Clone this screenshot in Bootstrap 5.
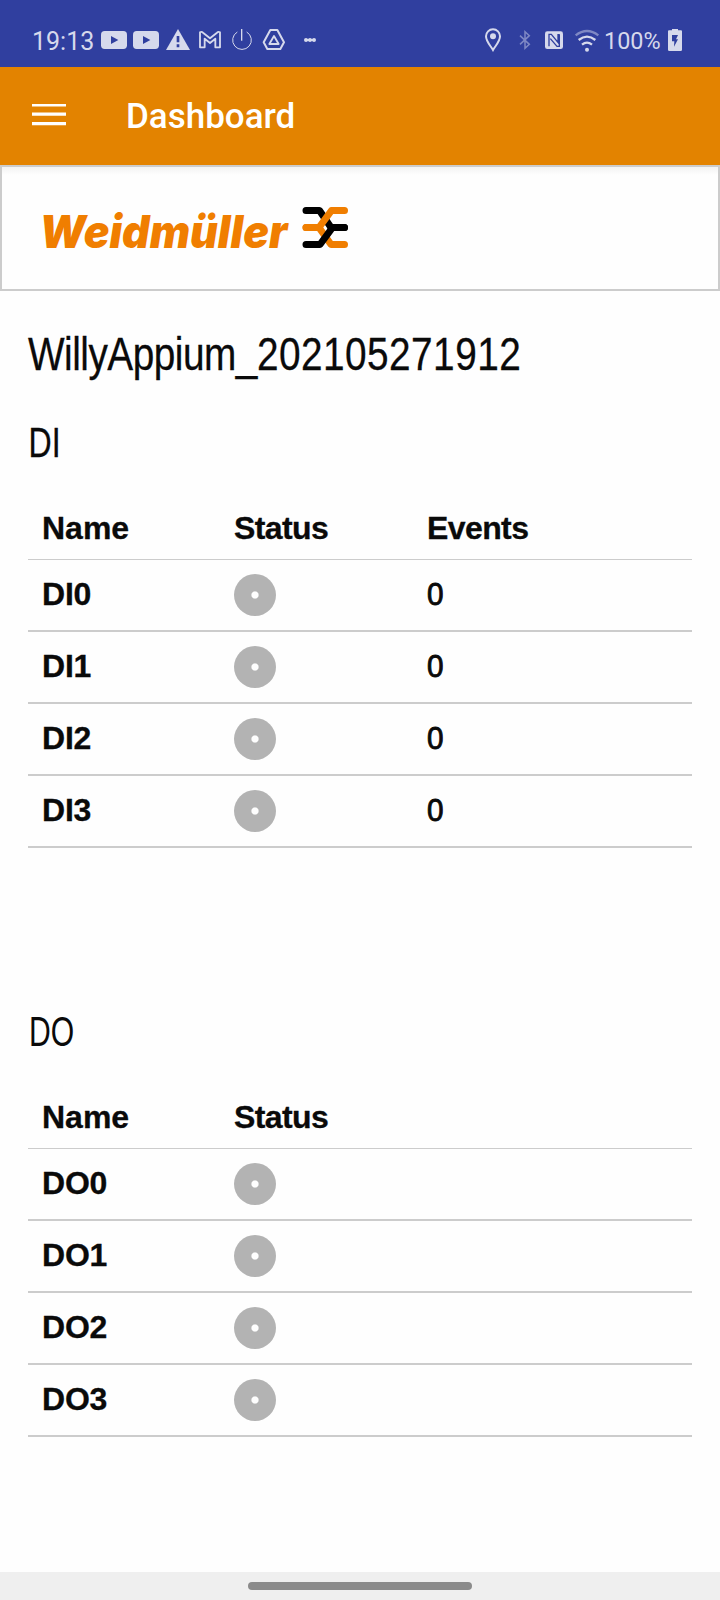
<!DOCTYPE html>
<html lang="en">
<head>
<meta charset="utf-8">
<meta name="viewport" content="width=device-width, initial-scale=1">
<title>Dashboard</title>
<link href="https://cdn.jsdelivr.net/npm/bootstrap@5.3.0/dist/css/bootstrap.min.css" rel="stylesheet">
<style>
  body { background: #fefefe; color: #0a0a0a; font-family: "Liberation Sans", Arial, sans-serif; }
  .screen { width: 720px; height: 1600px; }
  .statusbar { height: 67px; padding: 28px 0 0 32px; background: #303f9f; color: #d6d9ec; font-family: Roboto, sans-serif; line-height: 24px; }
  .statusbar svg { display: block; height: 24px; flex: none; }
  .clock { width: 67px; font-size: 25px; padding-top: 2px; }
  .battery-text { width: 61px; font-size: 23.4px; padding-top: 1px; }
  .appbar { height: 98px; padding-left: 32px; background: #e38300; color: #fff; font-family: Roboto, sans-serif; }
  .appbar-title { font-size: 35px; font-weight: 500; line-height: 40px; margin-left: 60px; padding-top: 2px; }
  .brand { height: 126px; border: 2px solid #ccc; background: linear-gradient(#f2f2f2, #fefefe 8px); padding: 28px 0 0 38px; }
  .brand svg { display: block; }
  .page { padding: 33px 28px 0; }
  .title-text { font-size: 46.5px; line-height: 60px; white-space: nowrap; transform-origin: 0 50%; transform: scaleX(.834); margin: 0; font-weight: 400; -webkit-text-stroke: .3px #0a0a0a; }
  .title-word { letter-spacing: -.6px; }
  .title-stamp { letter-spacing: .55px; }
  .section-text { font-size: 43px; line-height: 60px; margin: 0 0 25px; font-weight: 400; transform-origin: 0 50%; transform: translateX(.5px) scaleX(.745); -webkit-text-stroke: .3px #0a0a0a; }
  .section-text.outputs { transform: translateX(1px) scaleX(.7); -webkit-text-stroke: 0; }
  .io { table-layout: fixed; margin: 0; color: #0a0a0a; --bs-table-bg: transparent; --bs-table-color: #0a0a0a; border-collapse: separate; border-spacing: 0; font-size: 32px; line-height: 36px; }
  .io > :not(caption) > * > * { padding: 0 14px; vertical-align: middle; border: 0 solid #ccc; }
  .io > thead > tr > th { height: 63px; border-bottom-width: 1px; }
  .io > thead > tr > th + th { letter-spacing: -.6px; }
  .io > tbody > tr > * { height: 72px; border-bottom-width: 2px; }
  .io > tbody > tr > th, .io > tbody > tr > td.count { padding-bottom: 2px; }
  .io > tbody > tr > th { letter-spacing: -.2px; }
  .io th { -webkit-text-stroke: .3px #0a0a0a; }
  .count { -webkit-text-stroke: .9px #0a0a0a; }
  .count span { display: inline-block; transform: scaleX(.93); transform-origin: 0 50%; }
  .led { display: block; width: 42px; height: 42px; border-radius: 50%; background: radial-gradient(circle, #fefefe 3px, #b3b3b3 4.2px); }
  .gesture { height: 28px; background: #efefef; }
  .pill { width: 224px; height: 8px; border-radius: 4px; background: #8b8b8b; }
</style>
</head>
<body>
<div class="screen d-flex flex-column overflow-hidden">
  <div class="statusbar d-flex">
    <div class="clock flex-shrink-0">19:13</div>
    <svg width="32" viewBox="297 84 96 72"><rect x="303" y="93" width="78" height="54" rx="11" fill="#d6d9ec"/><path d="M333 108l22 12-22 12z" fill="#303f9f"/></svg>
    <svg width="33" viewBox="393 84 99 72"><rect x="399" y="93" width="78" height="54" rx="11" fill="#d6d9ec"/><path d="M429 108l22 12-22 12z" fill="#303f9f"/></svg>
    <svg width="32" viewBox="492 84 96 72"><path d="M534 87l36 63h-72z" fill="#d6d9ec"/><path d="M534 108v19M534 133v9" stroke="#303f9f" stroke-width="8"/></svg>
    <svg width="33" viewBox="588 84 99 72" fill="none" stroke="#d6d9ec"><path d="M600 142V97q5-3 9 1l21 17 21-17q4-4 9-1v45h-14v-26l-16 13-16-13v26z" stroke-width="5.500" stroke-linejoin="round"/></svg>
    <svg width="31" viewBox="687 84 93 72" fill="none" stroke="#d6d9ec"><path d="M725 87v35" stroke-width="4"/><path d="M712 96a28 28 0 1 0 28 0" stroke-width="3"/></svg>
    <svg width="40" viewBox="780 84 120 72" fill="none" stroke="#d6d9ec" stroke-linejoin="round"><path d="M811 90h21l20 37-11 20h-39l-11-20z" stroke-width="6"/><path d="M822 108l14 24h-28z" stroke-width="5.500"/></svg>
    <svg width="20" viewBox="900 84 60 72" fill="#d6d9ec"><circle cx="918" cy="120" r="6"/><circle cx="930" cy="120" r="6"/><circle cx="942" cy="120" r="6"/><path d="M918 117h24v6h-24z"/></svg>
    <svg class="ms-auto" width="30" viewBox="60 84 90 72"><path d="M99 150c-6-11-21-25-21-41a21 21 0 0 1 42 0c0 16-15 30-21 41z" fill="none" stroke="#d6d9ec" stroke-width="6"/><circle cx="99" cy="109" r="9" fill="#d6d9ec"/></svg>
    <svg width="30" viewBox="150 84 90 72" fill="none" stroke="#7f88c4" stroke-width="4.500"><path d="M180 107l28 26-13 12V95l13 12-28 26"/></svg>
    <svg width="30" viewBox="240 84 90 72"><rect x="255" y="94" width="54" height="53" rx="7" fill="#d6d9ec"/><path d="M267 139v-36h7l20 24v-23h4M298 103v36h-7l-20-23" fill="none" stroke="#303f9f" stroke-width="4"/></svg>
    <svg width="34" viewBox="330 84 102 72" fill="none" stroke-width="7"><path d="M347 106q34-26 68 0" stroke="#7f88c4"/><path d="M356 120q25-20 50 0M366 134q15-12 30 0" stroke="#d6d9ec"/><circle cx="381" cy="149" r="6" fill="#d6d9ec"/></svg>
    <div class="battery-text flex-shrink-0">100%</div>
    <svg width="55" viewBox="615 84 165 72"><path d="M624 94q0-3 3-3h9v-4h18v4h9q3 0 3 3v55q0 4-4 4h-34q-4 0-4-4z" fill="#d6d9ec"/><path d="M636 105h18l-6 13h6l-12 22 1-16h-7z" fill="#303f9f"/></svg>
  </div>
  <header class="appbar d-flex align-items-center">
    <svg width="34" height="24" viewBox="0 0 34 24" fill="#fff" class="flex-shrink-0"><path d="M0 1h34v3.300H0zM0 10.300h34v3.300H0zM0 19.700h34v3.300H0z" transform="translate(0 -1.800)"/></svg>
    <div class="appbar-title">Dashboard</div>
  </header>
  <div class="brand">
    <svg width="320" height="70" viewBox="40 195 320 70">
      <text x="39.500" y="247.500" font-family="Inter, sans-serif" font-weight="900" font-style="italic" font-size="45" fill="#f07e00" textLength="248" lengthAdjust="spacingAndGlyphs">Weidmüller</text>
      <g fill="none" stroke-width="7" stroke-linecap="round" stroke-linejoin="round">
        <path d="M306 210.500H319.500L331 227.500H344.500" stroke="#000"/>
        <path d="M344.500 244.500H331L319 227.500H306" stroke="#f07e00"/>
        <path d="M344.500 210.500H331.500L319 227.500H306" stroke="#f07e00"/>
        <path d="M306 244.500H320L332.500 227.500H344.500" stroke="#000"/>
      </g>
    </svg>
  </div>
  <main class="page flex-grow-1">
    <h1 class="title-text"><span class="title-word">WillyAppium_</span><span class="title-stamp">202105271912</span></h1>
    <h2 class="section-text" style="margin-top:28px">DI</h2>
    <table class="table io">
      <colgroup><col style="width:192px"><col style="width:193px"><col></colgroup>
      <thead><tr><th>Name</th><th>Status</th><th>Events</th></tr></thead>
      <tbody>
        <tr><th>DI0</th><td><span class="led"></span></td><td class="count"><span>0</span></td></tr>
        <tr><th>DI1</th><td><span class="led"></span></td><td class="count"><span>0</span></td></tr>
        <tr><th>DI2</th><td><span class="led"></span></td><td class="count"><span>0</span></td></tr>
        <tr><th>DI3</th><td><span class="led"></span></td><td class="count"><span>0</span></td></tr>
      </tbody>
    </table>
    <h2 class="section-text outputs" style="margin-top:153px">DO</h2>
    <table class="table io">
      <colgroup><col style="width:192px"><col style="width:193px"><col></colgroup>
      <thead><tr><th>Name</th><th>Status</th><th></th></tr></thead>
      <tbody>
        <tr><th>DO0</th><td><span class="led"></span></td><td></td></tr>
        <tr><th>DO1</th><td><span class="led"></span></td><td></td></tr>
        <tr><th>DO2</th><td><span class="led"></span></td><td></td></tr>
        <tr><th>DO3</th><td><span class="led"></span></td><td></td></tr>
      </tbody>
    </table>
  </main>
  <footer class="gesture d-flex justify-content-center flex-shrink-0"><div class="pill" style="margin-top:10px"></div></footer>
</div>
<script src="https://cdn.jsdelivr.net/npm/bootstrap@5.3.0/dist/js/bootstrap.bundle.min.js"></script>
</body>
</html>
